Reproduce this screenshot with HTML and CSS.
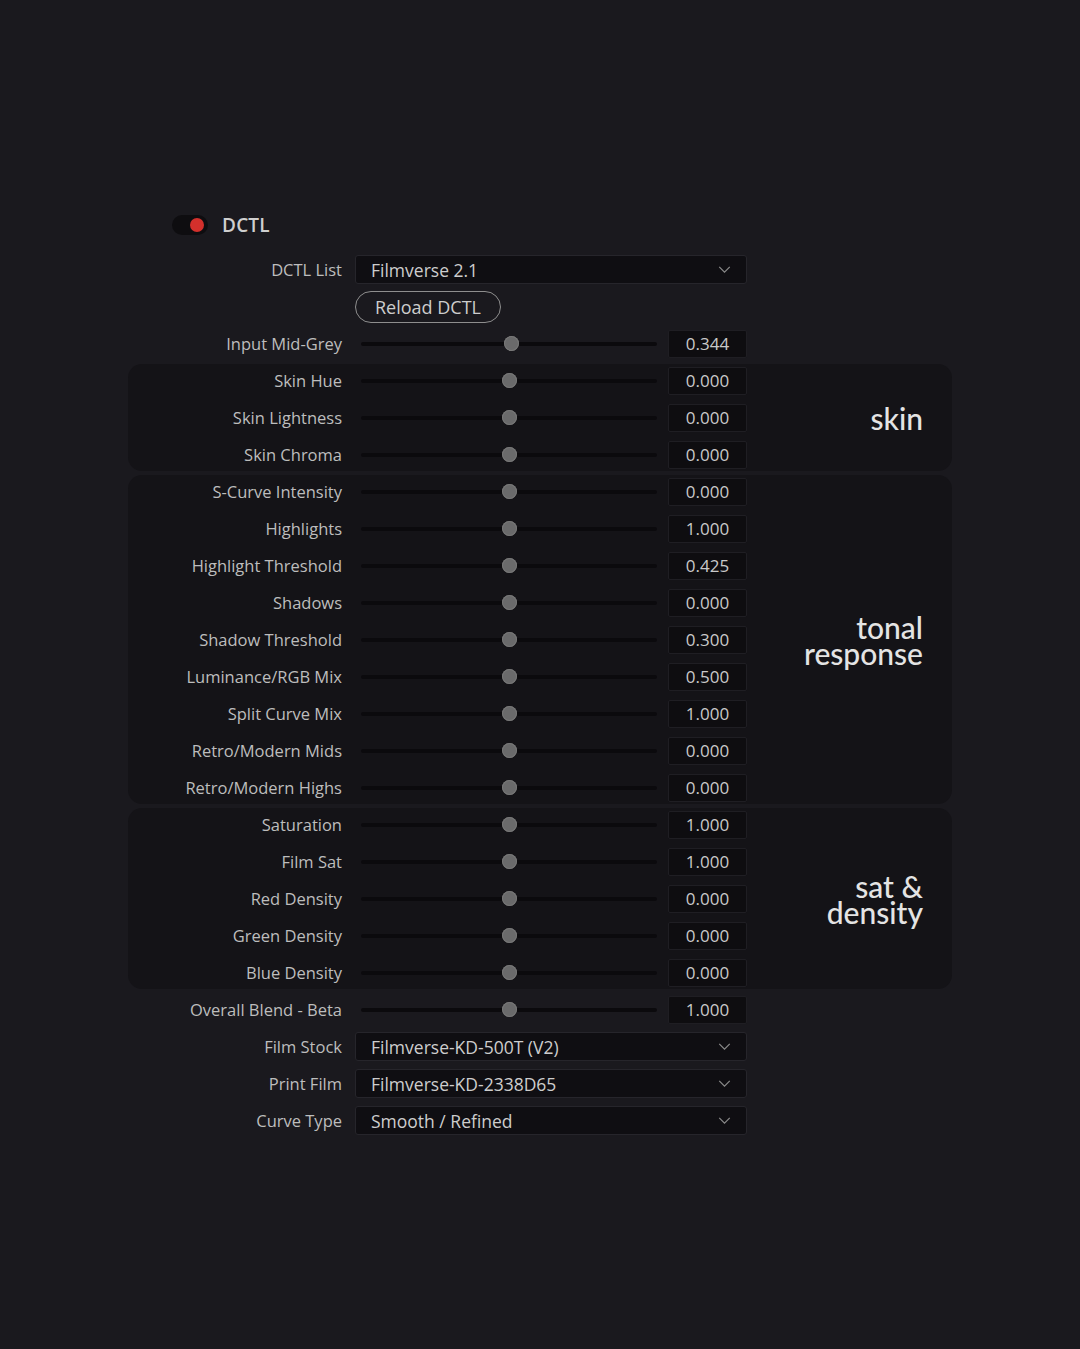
FILE: index.html
```html
<!DOCTYPE html>
<html>
<head>
<meta charset="utf-8">
<link rel="stylesheet" href="styles.css">
</head>
<body>
<div class="page">
  <div class="header">
    <span class="toggle"><span class="dot"></span></span>
    <span class="title">DCTL</span>
  </div>

  <div class="row">
    <div class="label">DCTL List</div>
    <div class="select"><span>Filmverse 2.1</span><svg class="chev" viewBox="0 0 14 8"><path d="M1 1 L7 7 L13 1"/></svg></div>
  </div>
  <div class="row">
    <div class="label"></div>
    <div class="btnwrap"><button class="reload">Reload DCTL</button></div>
  </div>

  <div class="row">
    <div class="label">Input Mid-Grey</div>
    <div class="slider"><div class="track"><span class="thumb" style="left:51%"></span></div><div class="value">0.344</div></div>
  </div>

  <div class="group">
    <div class="rows">
      <div class="row"><div class="label">Skin Hue</div><div class="slider"><div class="track"><span class="thumb"></span></div><div class="value">0.000</div></div></div>
      <div class="row"><div class="label">Skin Lightness</div><div class="slider"><div class="track"><span class="thumb"></span></div><div class="value">0.000</div></div></div>
      <div class="row"><div class="label">Skin Chroma</div><div class="slider"><div class="track"><span class="thumb"></span></div><div class="value">0.000</div></div></div>
    </div>
    <div class="gname">skin</div>
  </div>

  <div class="group">
    <div class="rows">
      <div class="row"><div class="label">S-Curve Intensity</div><div class="slider"><div class="track"><span class="thumb"></span></div><div class="value">0.000</div></div></div>
      <div class="row"><div class="label">Highlights</div><div class="slider"><div class="track"><span class="thumb"></span></div><div class="value">1.000</div></div></div>
      <div class="row"><div class="label">Highlight Threshold</div><div class="slider"><div class="track"><span class="thumb"></span></div><div class="value">0.425</div></div></div>
      <div class="row"><div class="label">Shadows</div><div class="slider"><div class="track"><span class="thumb"></span></div><div class="value">0.000</div></div></div>
      <div class="row"><div class="label">Shadow Threshold</div><div class="slider"><div class="track"><span class="thumb"></span></div><div class="value">0.300</div></div></div>
      <div class="row"><div class="label">Luminance/RGB Mix</div><div class="slider"><div class="track"><span class="thumb"></span></div><div class="value">0.500</div></div></div>
      <div class="row"><div class="label">Split Curve Mix</div><div class="slider"><div class="track"><span class="thumb"></span></div><div class="value">1.000</div></div></div>
      <div class="row"><div class="label">Retro/Modern Mids</div><div class="slider"><div class="track"><span class="thumb"></span></div><div class="value">0.000</div></div></div>
      <div class="row"><div class="label">Retro/Modern Highs</div><div class="slider"><div class="track"><span class="thumb"></span></div><div class="value">0.000</div></div></div>
    </div>
    <div class="gname">tonal<br>response</div>
  </div>

  <div class="group">
    <div class="rows">
      <div class="row"><div class="label">Saturation</div><div class="slider"><div class="track"><span class="thumb"></span></div><div class="value">1.000</div></div></div>
      <div class="row"><div class="label">Film Sat</div><div class="slider"><div class="track"><span class="thumb"></span></div><div class="value">1.000</div></div></div>
      <div class="row"><div class="label">Red Density</div><div class="slider"><div class="track"><span class="thumb"></span></div><div class="value">0.000</div></div></div>
      <div class="row"><div class="label">Green Density</div><div class="slider"><div class="track"><span class="thumb"></span></div><div class="value">0.000</div></div></div>
      <div class="row"><div class="label">Blue Density</div><div class="slider"><div class="track"><span class="thumb"></span></div><div class="value">0.000</div></div></div>
    </div>
    <div class="gname">sat &amp;<br>density</div>
  </div>

  <div class="row">
    <div class="label">Overall Blend - Beta</div>
    <div class="slider"><div class="track"><span class="thumb"></span></div><div class="value">1.000</div></div>
  </div>
  <div class="row">
    <div class="label">Film Stock</div>
    <div class="select"><span>Filmverse-KD-500T (V2)</span><svg class="chev" viewBox="0 0 14 8"><path d="M1 1 L7 7 L13 1"/></svg></div>
  </div>
  <div class="row">
    <div class="label">Print Film</div>
    <div class="select"><span>Filmverse-KD-2338D65</span><svg class="chev" viewBox="0 0 14 8"><path d="M1 1 L7 7 L13 1"/></svg></div>
  </div>
  <div class="row">
    <div class="label">Curve Type</div>
    <div class="select"><span>Smooth / Refined</span><svg class="chev" viewBox="0 0 14 8"><path d="M1 1 L7 7 L13 1"/></svg></div>
  </div>
</div>
</body>
</html>
```

FILE: styles.css
```css
html, body {
  margin: 0;
  padding: 0;
}
body {
  width: 1080px;
  height: 1349px;
  overflow: hidden;
  background: #1a191e;
  font-family: "Open Sans", "Noto Sans", sans-serif;
  color: #bfbfbf;
}
.page {
  display: flex;
  flex-direction: column;
  padding: 210px 0 0 128px;
  width: 824px;
}
.header {
  height: 30px;
  display: flex;
  align-items: center;
  margin-bottom: 11px;
  padding-left: 44px;
}
.toggle {
  width: 36px;
  height: 20px;
  border-radius: 10px;
  background: #0e0d10;
  display: flex;
  align-items: center;
  justify-content: flex-end;
  padding-right: 4px;
  box-sizing: border-box;
}
.dot {
  width: 14px;
  height: 14px;
  border-radius: 50%;
  background: #d3302c;
}
.title {
  margin-left: 14px;
  font-size: 19px;
  font-weight: 600;
  color: #cfcfcf;
  letter-spacing: 0.2px;
}
.row {
  height: 37px;
  display: grid;
  grid-template-columns: 214px 392px;
  column-gap: 13px;
  align-items: center;
}
.label {
  text-align: right;
  font-size: 16.5px;
  color: #bdbdbd;
  white-space: nowrap;
}
.select {
  height: 29px;
  box-sizing: border-box;
  background: #0f0e12;
  border: 1px solid #26252b;
  border-radius: 3px;
  display: flex;
  align-items: center;
  justify-content: space-between;
  padding: 0 15px 0 15px;
  font-size: 17.5px;
  color: #cdcdcd;
}
.chev {
  width: 13px;
  height: 7px;
  fill: none;
  stroke: #8a8a8a;
  stroke-width: 1.4;
}
.btnwrap {
  display: flex;
  align-items: center;
}
.reload {
  height: 32px;
  width: 146px;
  border: 1.5px solid #8e8e8e;
  border-radius: 16px;
  background: transparent;
  font-family: "Open Sans", "Noto Sans", sans-serif;
  font-size: 18px;
  color: #cdcdcd;
  padding: 0;
  margin-top: 1px;
}
.slider {
  display: flex;
  align-items: center;
  padding-left: 6px;
  gap: 11px;
}
.track {
  flex: 1;
  height: 4px;
  background: #0b0a0d;
  border-radius: 2px;
  position: relative;
}
.thumb {
  position: absolute;
  left: 50%;
  top: 50%;
  width: 15px;
  height: 15px;
  margin: -7.5px 0 0 -7.5px;
  border-radius: 50%;
  background: #6a6a6b;
  box-shadow: inset 0 0 0 1px #777;
}
.value {
  width: 79px;
  height: 28px;
  box-sizing: border-box;
  background: #0e0d10;
  border: 1px solid #1f1e23;
  border-radius: 2px;
  display: flex;
  align-items: center;
  justify-content: center;
  font-size: 17px;
  color: #c9c9c9;
}
.group {
  display: flex;
  background: #141317;
  border-radius: 14px;
  margin: 2px 0;
}
.group .rows > .row:first-child {
  margin-top: -2px;
}
.group .rows > .row:last-child {
  margin-bottom: -2px;
}
.gname {
  flex: 1;
  align-self: center;
  text-align: right;
  padding-right: 29px;
  font-family: "Lato", "Open Sans", sans-serif;
  font-size: 30px;
  font-weight: 500;
  line-height: 26px;
  color: #e4e4e4;
  letter-spacing: 0;
}
```
